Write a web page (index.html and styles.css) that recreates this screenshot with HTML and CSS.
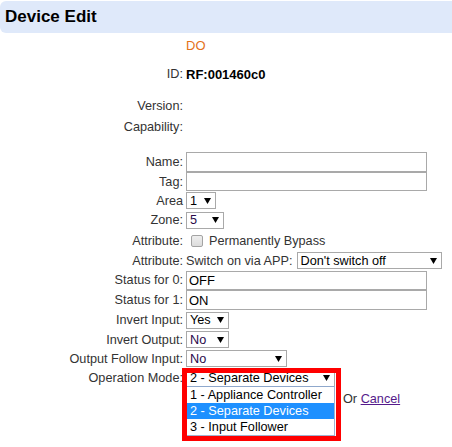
FILE: index.html
```html
<!DOCTYPE html>
<html>
<head>
<meta charset="utf-8">
<title>Device Edit</title>
<link rel="stylesheet" href="styles.css">
</head>
<body>
<div class="header">Device Edit</div>
<div class="form">
  <div class="row h-do"><span class="label"></span><span class="value type">DO</span></div>
  <div class="row h-id"><span class="label">ID:</span><span class="value strong">RF:001460c0</span></div>
  <div class="row h-ver"><span class="label">Version:</span><span class="value"></span></div>
  <div class="row h-cap"><span class="label">Capability:</span><span class="value"></span></div>

  <div class="row h21 gap-top"><span class="label">Name:</span><span class="value"><input class="text" type="text" value=""></span></div>
  <div class="row h19"><span class="label">Tag:</span><span class="value"><input class="text t19" type="text" value=""></span></div>
  <div class="row h19"><span class="label">Area</span><span class="value"><span class="sel w30"><span>1</span><svg class="arrow" width="7" height="6" viewBox="0 0 7 6"><polygon points="0,0 7,0 3.5,6"/></svg></span></span></div>
  <div class="row h20"><span class="label">Zone:</span><span class="value"><span class="sel w38"><span class="num">5</span><svg class="arrow" width="7" height="6" viewBox="0 0 7 6"><polygon points="0,0 7,0 3.5,6"/></svg></span></span></div>
  <div class="row h21"><span class="label">Attribute:</span><span class="value check"><input class="cb" type="checkbox"><span>Permanently Bypass</span></span></div>
  <div class="row h19"><span class="label">Attribute:</span><span class="value inline"><span>Switch on via APP:</span><span class="sel w145"><span>Don't switch off</span><svg class="arrow" width="7" height="6" viewBox="0 0 7 6"><polygon points="0,0 7,0 3.5,6"/></svg></span></span></div>
  <div class="row h20"><span class="label">Status for 0:</span><span class="value"><input class="text t19" type="text" value="OFF"></span></div>
  <div class="row h20"><span class="label">Status for 1:</span><span class="value"><input class="text" type="text" value="ON"></span></div>
  <div class="row h20"><span class="label">Invert Input:</span><span class="value"><span class="sel w42"><span>Yes</span><svg class="arrow" width="7" height="6" viewBox="0 0 7 6"><polygon points="0,0 7,0 3.5,6"/></svg></span></span></div>
  <div class="row h19"><span class="label">Invert Output:</span><span class="value"><span class="sel w42"><span class="num">No</span><svg class="arrow" width="7" height="6" viewBox="0 0 7 6"><polygon points="0,0 7,0 3.5,6"/></svg></span></span></div>
  <div class="row h19"><span class="label">Output Follow Input:</span><span class="value"><span class="sel w100"><span class="num">No</span><svg class="arrow" width="7" height="6" viewBox="0 0 7 6"><polygon points="0,0 7,0 3.5,6"/></svg></span></span></div>
  <div class="row h20"><span class="label">Operation Mode:</span><span class="value">
    <span class="combo">
      <span class="sel w149 open"><span>2 - Separate Devices</span><svg class="arrow" width="7" height="6" viewBox="0 0 7 6"><polygon points="0,0 7,0 3.5,6"/></svg></span>
      <span class="list">
        <span class="opt">1 - Appliance Controller</span>
        <span class="opt selected">2 - Separate Devices</span>
        <span class="opt">3 - Input Follower</span>
      </span>
      <span class="frame"></span>
    </span>
  </span></div>
  <div class="row h22"><span class="label"></span><span class="value inline"><button class="save" type="button">Save</button><span>Or <a class="cancel" href="#">Cancel</a></span></span></div>
</div>
</body>
</html>
```

FILE: styles.css
```css
html, body {
  margin: 0;
  padding: 0;
  background: #fff;
}
body {
  min-height: 447px;
  font-family: "Liberation Sans", Arial, sans-serif;
  font-size: 12.7px;
  color: #333;
}
.header {
  margin-top: 1px;
  height: 32px;
  background: #dfe9fa;
  border-radius: 6px 0 0 6px;
  display: flex;
  align-items: center;
  padding-left: 5px;
  font-size: 17px;
  font-weight: bold;
  color: #000;
}
.form {
  display: flex;
  flex-direction: column;
}
.row {
  display: grid;
  grid-template-columns: 183px 1fr;
  column-gap: 3px;
  align-items: center;
}
.label {
  text-align: right;
  white-space: nowrap;
  color: #333;
}
.value {
  display: flex;
  align-items: center;
  white-space: nowrap;
}
.inline { gap: 4px; }
.type { color: #e4711a; font-size: 13px; }
.strong { font-weight: bold; color: #000; font-size: 13px; }

.h-do { height: 24px; }
.h-id { height: 22px; margin-top: 6px; }
.h-ver { height: 20px; margin-top: 11px; }
.h-cap { height: 22px; }
.gap-top { margin-top: 13px; }
.h19 { height: 19px; }
.h20 { height: 20px; }
.h21 { height: 21px; }
.h22 { height: 22px; }

.text {
  box-sizing: border-box;
  width: 241px;
  height: 20px;
  margin: 0;
  padding: 0 2px;
  border: 1px solid #a9a9a9;
  font-family: "Liberation Sans", Arial, sans-serif;
  font-size: 13px;
  color: #000;
  background: #fff;
  outline: none;
}
.t19 { height: 19px; }

.sel {
  box-sizing: border-box;
  display: flex;
  align-items: center;
  justify-content: space-between;
  height: 17px;
  padding: 0 4px 0 3px;
  border: 1px solid #a9a9a9;
  background: #fff;
  color: #000;
}
.num { color: #2a0a4a; }
.arrow { fill: #000; flex: none; }
.w30 { width: 30px; }
.w38 { width: 38px; }
.w42 { width: 43px; }
.w100 { width: 101px; }
.w145 { width: 145px; }
.w149 { width: 149px; height: 18px; }

.check { gap: 6px; }
.cb {
  appearance: none;
  -webkit-appearance: none;
  box-sizing: border-box;
  width: 12px;
  height: 12px;
  margin: 0 0 0 5px;
  border: 1px solid #a3a3a3;
  border-radius: 2px;
  background: linear-gradient(#eeeeee, #dcdcdc);
}

.combo {
  position: relative;
  display: block;
  width: 149px;
  height: 18px;
}
.open { border-bottom-color: #8fa8cc; }
.list {
  position: absolute;
  z-index: 2;
  top: 18px;
  left: 0;
  width: 149px;
  box-sizing: border-box;
  border: 1px solid #9fb2cf;
  border-top: none;
  background: #fff;
  display: flex;
  flex-direction: column;
}
.opt {
  height: 16px;
  line-height: 16px;
  padding-left: 3px;
  color: #000;
}
.opt.selected {
  background: #1e90ff;
  color: #fff;
}
.frame {
  position: absolute;
  z-index: 3;
  top: -1px;
  left: -4px;
  right: -6px;
  bottom: -54px;
  border: 5px solid #ff0000;
  pointer-events: none;
}
.save {
  visibility: hidden;
  width: 153px;
  height: 20px;
  margin: 0;
}
.cancel { color: #551a8b; text-decoration: underline; }
```
